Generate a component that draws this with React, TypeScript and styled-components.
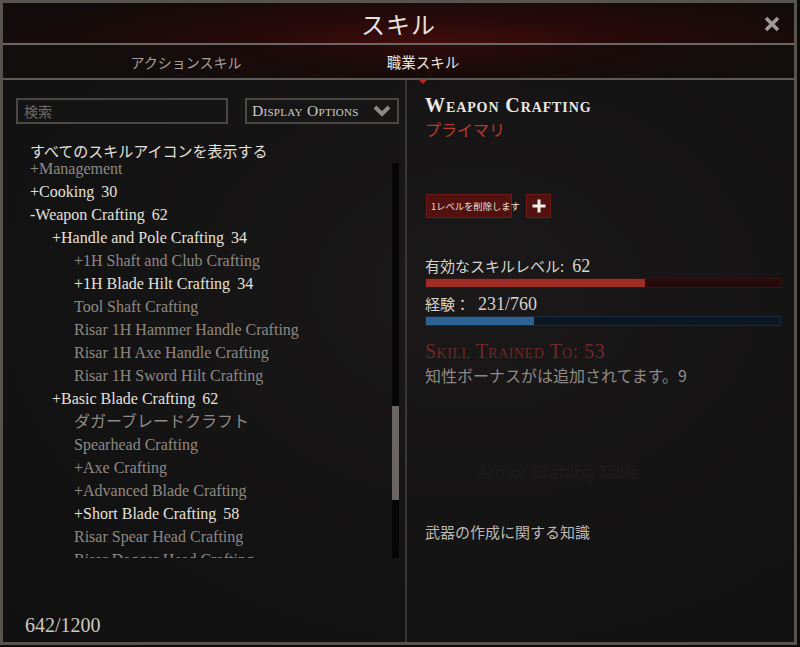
import React from 'react'
import styled, { createGlobalStyle } from 'styled-components'

const serif = `'Liberation Serif', 'Noto Sans CJK JP', serif`
const jp = `'Noto Sans CJK JP', 'Noto Sans', sans-serif`

const GlobalStyle = createGlobalStyle`
  html, body {
    margin: 0;
    padding: 0;
    background: #0c0b0b;
  }
  * {
    box-sizing: border-box;
  }
`

const Window = styled.div`
  width: 797px;
  height: 645px;
  border: 3px solid #57534f;
  background: radial-gradient(ellipse at 60% 45%, #1a1818 0%, #141313 60%, #111010 100%);
  display: flex;
  flex-direction: column;
  overflow: hidden;
`

const TitleBar = styled.div`
  height: 42px;
  flex-shrink: 0;
  display: flex;
  align-items: center;
  justify-content: center;
  position: relative;
  background: radial-gradient(ellipse 55% 140% at 55% 100%, #420d0d 0%, #260909 45%, #130b0b 100%);
  border-bottom: 2px solid #6b6764;
`

const Title = styled.h1`
  margin: 0;
  font-family: ${jp};
  font-weight: 400;
  font-size: 24px;
  color: #e6e2dc;
  letter-spacing: 1px;
`

const CloseButton = styled.div`
  position: absolute;
  right: 14px;
  top: 13px;
  width: 16px;
  height: 16px;
`

const TabBar = styled.div`
  height: 35px;
  flex-shrink: 0;
  display: flex;
  position: relative;
  background: radial-gradient(ellipse 45% 160% at 55% 0%, #2c0b0b 0%, #1a0a0a 50%, #120e0e 100%);
  border-bottom: 2px solid #5e5a57;
`

const Tab = styled.div<{ $active?: boolean }>`
  position: relative;
  display: flex;
  align-items: center;
  justify-content: center;
  font-family: ${jp};
  font-size: ${(p) => (p.$active ? '14.5px' : '14px')};
  color: ${(p) => (p.$active ? '#ebe6df' : '#a7a29c')};
`

const TabLeft = styled(Tab)`
  width: 366px;
`

const TabRight = styled(Tab)`
  width: 108px;
`

const TabMarker = styled.div`
  position: absolute;
  bottom: -6px;
  left: 50%;
  margin-left: -5px;
  width: 0;
  height: 0;
  border-left: 5px solid transparent;
  border-right: 5px solid transparent;
  border-top: 5px solid #c0241c;
`

const Body = styled.div`
  flex: 1;
  display: flex;
  min-height: 0;
`

const LeftPanel = styled.div`
  width: 404px;
  flex-shrink: 0;
  display: flex;
  flex-direction: column;
  padding: 18px 6px 0 13px;
  border-right: 2px solid #383533;
`

const Controls = styled.div`
  display: flex;
  align-items: center;
`

const SearchBox = styled.div`
  width: 212px;
  height: 26px;
  border: 2px solid #4a4744;
  background: #151414;
  font-family: ${jp};
  font-size: 14px;
  color: #6f6a66;
  display: flex;
  align-items: center;
  padding-left: 6px;
`

const Select = styled.div`
  margin-left: 17px;
  width: 154px;
  height: 26px;
  border: 2px solid #4a4744;
  background: #171616;
  display: flex;
  align-items: center;
  justify-content: space-between;
  padding: 0 5px 0 5px;
  font-family: ${serif};
  font-variant: small-caps;
  font-size: 15.5px;
  letter-spacing: 0.3px;
  color: #cfcac3;
`

const ShowAll = styled.div`
  margin-top: 21px;
  padding-left: 14px;
  line-height: 12px;
  font-family: ${jp};
  font-size: 15px;
  color: #e4e0da;
`

const TreeArea = styled.div`
  display: flex;
  height: 401px;
`

const TreeList = styled.ul`
  flex: 1;
  margin: 0;
  padding: 0;
  list-style: none;
  overflow: hidden;
`

const Row = styled.li<{ $level: number; $bright?: boolean }>`
  height: 23px;
  line-height: 23px;
  white-space: nowrap;
  padding-left: ${(p) => 14 + p.$level * 22}px;
  font-family: ${serif};
  font-size: 16px;
  color: ${(p) => (p.$bright ? '#e6e1da' : '#8e8984')};
`

const Level = styled.span`
  margin-left: 7px;
`

const Track = styled.div`
  width: 7px;
  margin-top: 6px;
  height: 395px;
  background: #050505;
  position: relative;
  flex-shrink: 0;
`

const Thumb = styled.div`
  position: absolute;
  left: 0;
  right: 0;
  top: 243px;
  height: 94px;
  background: #6a6562;
`

const Points = styled.div`
  margin-top: auto;
  margin-bottom: 5px;
  padding-left: 9px;
  font-family: ${serif};
  font-size: 20px;
  color: #cdc8c1;
`

const RightPanel = styled.div`
  flex: 1;
  display: flex;
  flex-direction: column;
  padding: 13px 13px 0 18px;
  border-right: 2px solid #4e4b48;
`

const SkillName = styled.h2`
  margin: 0;
  line-height: 24px;
  font-family: ${serif};
  font-variant: small-caps;
  font-weight: 700;
  font-size: 20px;
  letter-spacing: 0.9px;
  color: #ece8e2;
`

const Primary = styled.div`
  line-height: 22px;
  margin-top: 1px;
  font-family: ${jp};
  font-size: 16px;
  color: #b8392d;
`

const ButtonRow = styled.div`
  display: flex;
  align-items: center;
  margin-top: 54px;
  margin-left: 1px;
  gap: 14px;
`

const RedButton = styled.div`
  height: 24px;
  background: #52110f;
  border: 1px solid #6a1c18;
  color: #e8e2da;
  display: flex;
  align-items: center;
  justify-content: center;
`

const RemoveButton = styled(RedButton)`
  width: 86px;
  font-family: ${jp};
  font-size: 9.3px;
  white-space: nowrap;
  overflow: visible;
  justify-content: flex-start;
  padding-left: 4px;
`

const PlusButton = styled(RedButton)`
  width: 25px;
`

const StatLabel = styled.div<{ $top: number }>`
  margin-top: ${(p) => p.$top}px;
  line-height: 20px;
  font-family: ${jp};
  font-size: 15px;
  color: #d8d3cc;
`

const Num = styled.span`
  font-family: ${serif};
  font-size: 18px;
  margin-left: 8px;
`

const Bar = styled.div<{ $track: string; $edge: string }>`
  margin-top: 2px;
  height: 10px;
  background: ${(p) => p.$track};
  border: 1px solid ${(p) => p.$edge};
  width: 356px;
`

const Fill = styled.div<{ $color: string }>`
  height: 100%;
  background: ${(p) => p.$color};
`

const Trained = styled.div`
  margin-top: 13px;
  line-height: 24px;
  font-family: ${serif};
  font-variant: small-caps;
  font-size: 20px;
  color: #6e272b;
  letter-spacing: 0.5px;
`

const Bonus = styled.div`
  margin-top: 1px;
  line-height: 22px;
  font-family: ${jp};
  font-size: 16px;
  color: #8f8a85;
`

const Ghost = styled.div`
  margin-top: 75px;
  margin-left: 53px;
  line-height: 22px;
  font-family: 'Noto Sans', sans-serif;
  font-size: 16.5px;
  color: #1d1b1b;
`

const Description = styled.div`
  margin-top: 38px;
  line-height: 22px;
  font-family: ${jp};
  font-size: 15px;
  color: #bdb8b1;
`

type Node = { label: string; level: number; plus?: boolean; minus?: boolean; value?: number; bright?: boolean }

const tree: Node[] = [
  { label: 'Management', level: 0, plus: true },
  { label: 'Cooking', level: 0, plus: true, value: 30, bright: true },
  { label: 'Weapon Crafting', level: 0, minus: true, value: 62, bright: true },
  { label: 'Handle and Pole Crafting', level: 1, plus: true, value: 34, bright: true },
  { label: '1H Shaft and Club Crafting', level: 2, plus: true },
  { label: '1H Blade Hilt Crafting', level: 2, plus: true, value: 34, bright: true },
  { label: 'Tool Shaft Crafting', level: 2 },
  { label: 'Risar 1H Hammer Handle Crafting', level: 2 },
  { label: 'Risar 1H Axe Handle Crafting', level: 2 },
  { label: 'Risar 1H Sword Hilt Crafting', level: 2 },
  { label: 'Basic Blade Crafting', level: 1, plus: true, value: 62, bright: true },
  { label: 'ダガーブレードクラフト', level: 2 },
  { label: 'Spearhead Crafting', level: 2 },
  { label: 'Axe Crafting', level: 2, plus: true },
  { label: 'Advanced Blade Crafting', level: 2, plus: true },
  { label: 'Short Blade Crafting', level: 2, plus: true, value: 58, bright: true },
  { label: 'Risar Spear Head Crafting', level: 2 },
  { label: 'Risar Dagger Head Crafting', level: 2 },
]

const Chevron = () => (
  <svg width="20" height="14" viewBox="0 0 20 14">
    <polyline points="3,3 10,10 17,3" fill="none" stroke="#8d8884" strokeWidth="4" strokeLinejoin="miter" />
  </svg>
)

const Cross = () => (
  <svg width="16" height="16" viewBox="0 0 16 16">
    <path d="M2 2 L14 14 M14 2 L2 14" stroke="#a09b95" strokeWidth="3.6" strokeLinecap="butt" />
  </svg>
)

const Plus = () => (
  <svg width="14" height="14" viewBox="0 0 14 14">
    <path d="M7 0.5 V13.5 M0.5 7 H13.5" stroke="#f2ede6" strokeWidth="3" />
  </svg>
)

export default function App() {
  const levelPct = 62
  const xpPct = (231 / 760) * 100
  return (
    <>
      <GlobalStyle />
      <Window>
        <TitleBar>
          <Title>スキル</Title>
          <CloseButton>
            <Cross />
          </CloseButton>
        </TitleBar>
        <TabBar>
          <TabLeft>アクションスキル</TabLeft>
          <TabRight $active>
            職業スキル
            <TabMarker />
          </TabRight>
        </TabBar>
        <Body>
          <LeftPanel>
            <Controls>
              <SearchBox>検索</SearchBox>
              <Select>
                <span>Display Options</span>
                <Chevron />
              </Select>
            </Controls>
            <ShowAll>すべてのスキルアイコンを表示する</ShowAll>
            <TreeArea>
              <TreeList>
                {tree.map((n) => (
                  <Row key={n.label} $level={n.level} $bright={n.bright}>
                    {n.plus ? '+' : n.minus ? '-' : ''}
                    {n.label}
                    {n.value !== undefined && <Level>{n.value}</Level>}
                  </Row>
                ))}
              </TreeList>
              <Track>
                <Thumb />
              </Track>
            </TreeArea>
            <Points>642/1200</Points>
          </LeftPanel>
          <RightPanel>
            <SkillName>Weapon Crafting</SkillName>
            <Primary>プライマリ</Primary>
            <ButtonRow>
              <RemoveButton>1レベルを削除します</RemoveButton>
              <PlusButton>
                <Plus />
              </PlusButton>
            </ButtonRow>
            <StatLabel $top={38}>
              有効なスキルレベル:<Num>62</Num>
            </StatLabel>
            <Bar $track="#240a0a" $edge="#341414">
              <Fill $color="#9d2c24" style={{ width: `${levelPct}%` }} />
            </Bar>
            <StatLabel $top={6}>
              経験：<Num>231/760</Num>
            </StatLabel>
            <Bar $track="#0b1824" $edge="#1a2a38">
              <Fill $color="#2c6393" style={{ width: `${xpPct}%` }} />
            </Bar>
            <Trained>Skill Trained To: 53</Trained>
            <Bonus>知性ボーナスがは追加されてます。9</Bonus>
            <Ghost>Armor Crafting Table</Ghost>
            <Description>武器の作成に関する知識</Description>
          </RightPanel>
        </Body>
      </Window>
    </>
  )
}
